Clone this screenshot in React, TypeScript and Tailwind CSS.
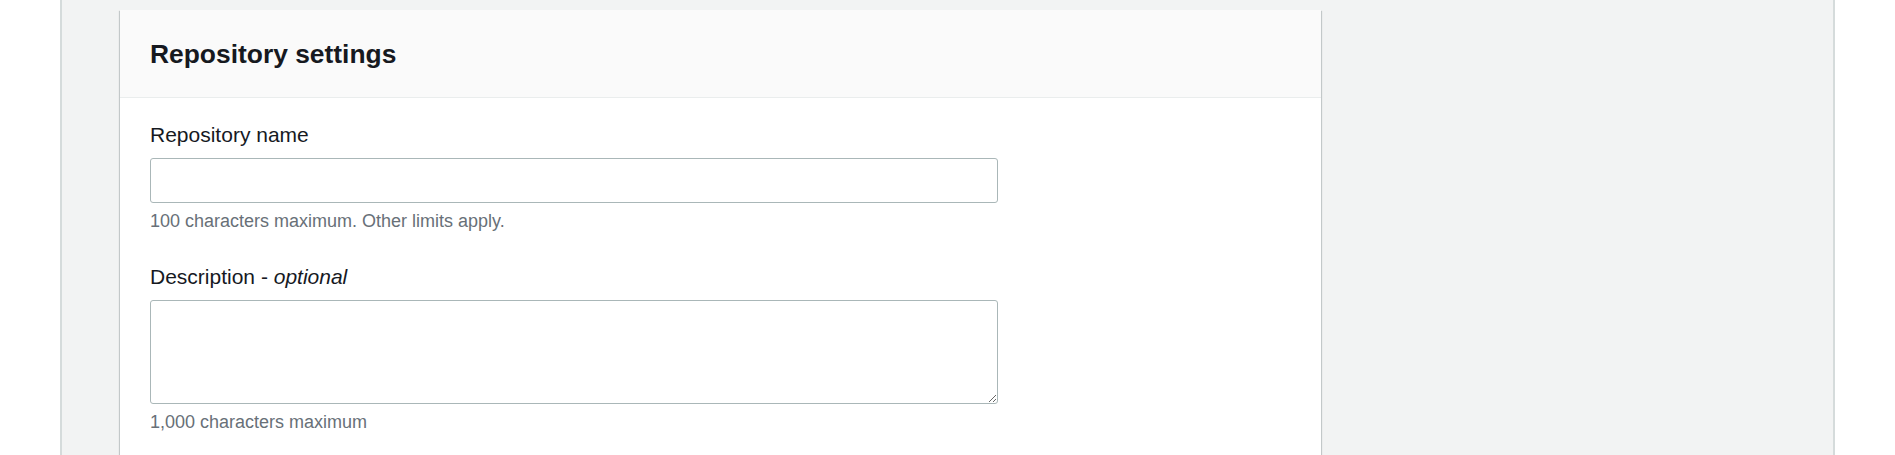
const fields = [
  { id: 'name', label: 'Repository name', optional: false, hint: '100 characters maximum. Other limits apply.', multiline: false },
  { id: 'description', label: 'Description', optional: true, hint: '1,000 characters maximum', multiline: true },
];

export default function App() {
  return (
    <div className="flex h-[455px] overflow-hidden bg-white font-['Liberation_Sans',Arial,sans-serif] text-[#16191f]">
      <div className="ml-[60px] h-full w-[1775px] border-x-2 border-[#d5dbdb] bg-[#f2f3f3] pl-[58px] pt-[10px]">
        <div className="w-[1201px] bg-white shadow-[0_1px_1px_0_rgba(0,28,36,0.3),1px_1px_1px_0_rgba(0,28,36,0.15),-1px_1px_1px_0_rgba(0,28,36,0.15)]">
          <div className="h-[88px] border-b border-[#eaeded] bg-[#fafafa] px-[30px] pt-[26px]">
            <h2 className="text-[26.4px] font-bold leading-[36px]">Repository settings</h2>
          </div>

          <div className="px-[30px] pb-[30px] pt-[22px]">
            {fields.map((f, i) => (
              <div key={f.id} className={i > 0 ? 'mt-[27px]' : ''}>
                <label htmlFor={f.id} className="block text-[21px] leading-[30px]">
                  {f.label}
                  {f.optional && (
                    <>
                      {' - '}
                      <i>optional</i>
                    </>
                  )}
                </label>
                {f.multiline ? (
                  <textarea
                    id={f.id}
                    className="mt-[8px] block h-[104px] w-[848px] rounded-[3px] border border-[#aab7b8] bg-white px-3 outline-none"
                  />
                ) : (
                  <input
                    id={f.id}
                    type="text"
                    className="mt-[8px] block h-[45px] w-[848px] rounded-[3px] border border-[#aab7b8] bg-white px-3 outline-none"
                  />
                )}
                <p className="mt-[5px] text-[18px] leading-[27px] text-[#687078]">{f.hint}</p>
              </div>
            ))}
          </div>
        </div>
      </div>
    </div>
  );
}
